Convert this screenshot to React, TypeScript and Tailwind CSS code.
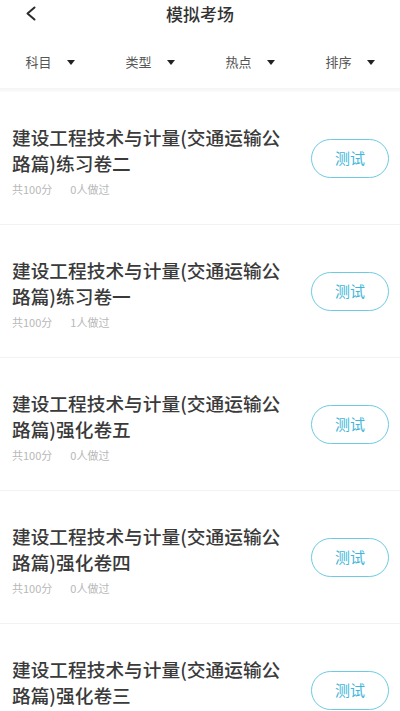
import { useState } from 'react'

interface Paper {
  title: string
  score: number
  done: number
}

const papers: Paper[] = [
  { title: '建设工程技术与计量(交通运输公路篇)练习卷二', score: 100, done: 0 },
  { title: '建设工程技术与计量(交通运输公路篇)练习卷一', score: 100, done: 1 },
  { title: '建设工程技术与计量(交通运输公路篇)强化卷五', score: 100, done: 0 },
  { title: '建设工程技术与计量(交通运输公路篇)强化卷四', score: 100, done: 0 },
  { title: '建设工程技术与计量(交通运输公路篇)强化卷三', score: 100, done: 0 },
]

const filters = ['科目', '类型', '热点', '排序']

const font = { fontFamily: '"Noto Sans CJK SC", "Liberation Sans", sans-serif' }

function PaperRow({ paper }: { paper: Paper }) {
  return (
    <div className="flex h-[133px] shrink-0 items-center border-b border-[#f2f2f2] pl-3 pr-[11px]">
      <div className="flex-1 pt-[3px]">
        <div className="w-[282px] text-[18.7px] leading-[26px] font-medium text-[#3a3a3a]">{paper.title}</div>
        <div className="mt-[6px] flex gap-[18px] text-[11px] leading-[14px] text-[#b8b8b8]">
          <span>共{paper.score}分</span>
          <span>{paper.done}人做过</span>
        </div>
      </div>
      <button className="flex h-[39px] w-[78px] items-center justify-center rounded-full border-[1.5px] border-[#6ccbe3] text-[15px] text-[#3fb6d9]">
        测试
      </button>
    </div>
  )
}

export default function App() {
  const [active] = useState(-1)

  return (
    <div className="flex h-[711px] w-[400px] flex-col overflow-hidden bg-white" style={font}>
      {/* Header */}
      <div className="relative flex h-[28px] shrink-0 items-center justify-center">
        <svg className="absolute left-[25px] top-[6px]" width="12" height="15" viewBox="0 0 12 15" fill="none">
          <path d="M9.5 1.5 L2.5 7.5 L9.5 13.5" stroke="#2b2b2b" strokeWidth="2" strokeLinecap="round" strokeLinejoin="round" />
        </svg>
        <span className="text-[17px] leading-[22px] font-medium text-[#333]">模拟考场</span>
      </div>

      {/* Filters */}
      <div className="grid h-[60px] shrink-0 grid-cols-4 items-center pt-[8px]">
        {filters.map((f, i) => (
          <div key={f} className="flex items-center justify-center gap-[15px]">
            <span className={i === active ? 'text-[13px] text-[#3fb6d9]' : 'text-[13px] text-[#555]'}>{f}</span>
            <svg width="8" height="5" viewBox="0 0 8 5">
              <path d="M0 0 H8 L4 5 Z" fill="#222" />
            </svg>
          </div>
        ))}
      </div>
      <div className="h-[4px] shrink-0 bg-gradient-to-b from-[#f4f4f4] to-[#fbfbfb]" />

      {/* List */}
      <div className="flex flex-col">
        {papers.map((p, i) => (
          <PaperRow key={i} paper={p} />
        ))}
      </div>
    </div>
  )
}
